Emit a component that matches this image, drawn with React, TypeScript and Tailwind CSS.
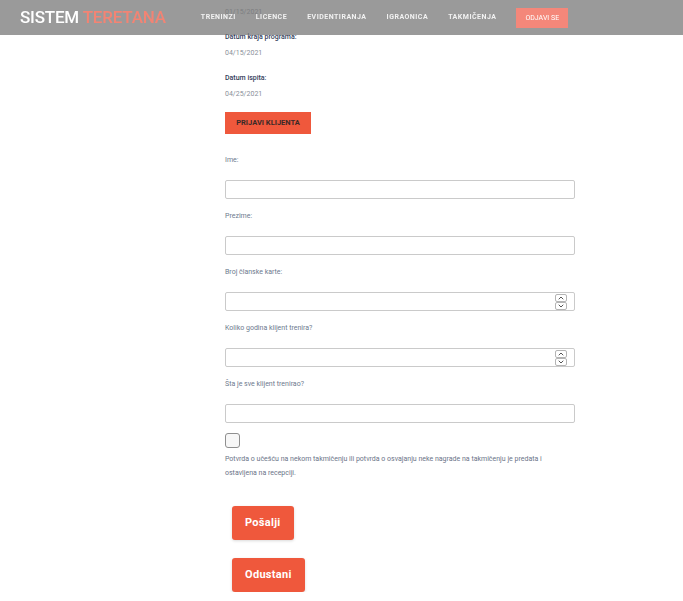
import { ChevronUp, ChevronDown } from "lucide-react";

const navItems = ["TRENINZI", "LICENCE", "EVIDENTIRANJA", "IGRAONICA", "TAKMIČENJA"];

function Header() {
  return (
    <header className="fixed top-0 left-0 right-0 z-10 flex h-[35px] items-center bg-[rgba(120,120,120,0.75)] px-[20px]">
      <div className="text-[17px] font-medium leading-none tracking-[-0.2px] text-white">
        SISTEM <span className="text-[#f28474]">TERETANA</span>
      </div>
      <nav className="ml-[35px] flex items-center gap-[20px]">
        {navItems.map((item) => (
          <a key={item} className="text-[7px] font-bold tracking-[0.5px] text-[#f2f2f2]">
            {item}
          </a>
        ))}
        <button className="bg-[#f4877a] px-[9px] py-[6px] text-[7px] leading-[8px] text-white">
          ODJAVI SE
        </button>
      </nav>
    </header>
  );
}

function DateField({ label, value }: { label: string; value: string }) {
  return (
    <div className="mb-[11px]">
      <p className="text-[7px] leading-[14px] font-medium text-[#34405a]">{label}</p>
      <p className="mt-[2px] text-[7px] leading-[14px] text-[#8a8f99]">{value}</p>
    </div>
  );
}

function TextField({ label, number }: { label: string; number?: boolean }) {
  return (
    <div className="mb-[10px]">
      <p className="text-[7px] leading-[14px] text-[#6d7a8e]">{label}</p>
      <div className="mt-[13px] flex h-[19px] w-[350px] items-center justify-end rounded-[2px] border border-[#cacaca] bg-white pr-[7px]">
        {number && (
          <div className="flex flex-col">
            <span className="flex h-[8px] w-[12px] items-center justify-center rounded-[2px] border border-[#b5b5b5] text-[#555]">
              <ChevronUp size={8} strokeWidth={3} />
            </span>
            <span className="flex h-[8px] w-[12px] items-center justify-center rounded-[2px] border border-[#b5b5b5] text-[#555]">
              <ChevronDown size={8} strokeWidth={3} />
            </span>
          </div>
        )}
      </div>
    </div>
  );
}

export default function App() {
  return (
    <div className="min-h-[601px] bg-white font-['Roboto',sans-serif]">
      <Header />
      <main className="-mt-[11px] ml-[225px] w-[350px]">
        <DateField label="Datum početka programa:" value="01/15/2021" />
        <DateField label="Datum kraja programa:" value="04/15/2021" />
        <DateField label="Datum ispita:" value="04/25/2021" />

        <button className="mt-[4px] block h-[22px] w-[86px] bg-[#ef583c] text-[7.5px] font-bold text-[#3a2a28]">
          PRIJAVI KLIJENTA
        </button>

        <div className="mt-[19px]">
          <TextField label="Ime:" />
          <TextField label="Prezime:" />
          <TextField label="Broj članske karte:" number />
          <TextField label="Koliko godina klijent trenira?" number />
          <TextField label="Šta je sve klijent trenirao?" />
        </div>

        <div className="mt-[2px] h-[15px] w-[15px] rounded-[3px] border border-[#8f8f8f] bg-[#f7f7f7]" />
        <p className="mt-[4px] w-[340px] text-[7px] leading-[14px] text-[#6b7488]">
          Potvrda o učešću na nekom takmičenju ili potvrda o osvajanju neke nagrade na takmičenju je predata i ostavljena na recepciji.
        </p>

        <div className="ml-[7px] mt-[26px] flex flex-col items-start gap-[18px]">
          <button className="h-[34px] rounded-[3px] bg-[#ef583c] px-[13px] text-[11px] font-bold tracking-[0.3px] text-white shadow-[0_1px_3px_rgba(0,0,0,0.15)]">
            Pošalji
          </button>
          <button className="h-[34px] rounded-[3px] bg-[#ef583c] px-[13px] text-[11px] font-bold tracking-[0.3px] text-white shadow-[0_1px_3px_rgba(0,0,0,0.15)]">
            Odustani
          </button>
        </div>
      </main>
    </div>
  );
}
